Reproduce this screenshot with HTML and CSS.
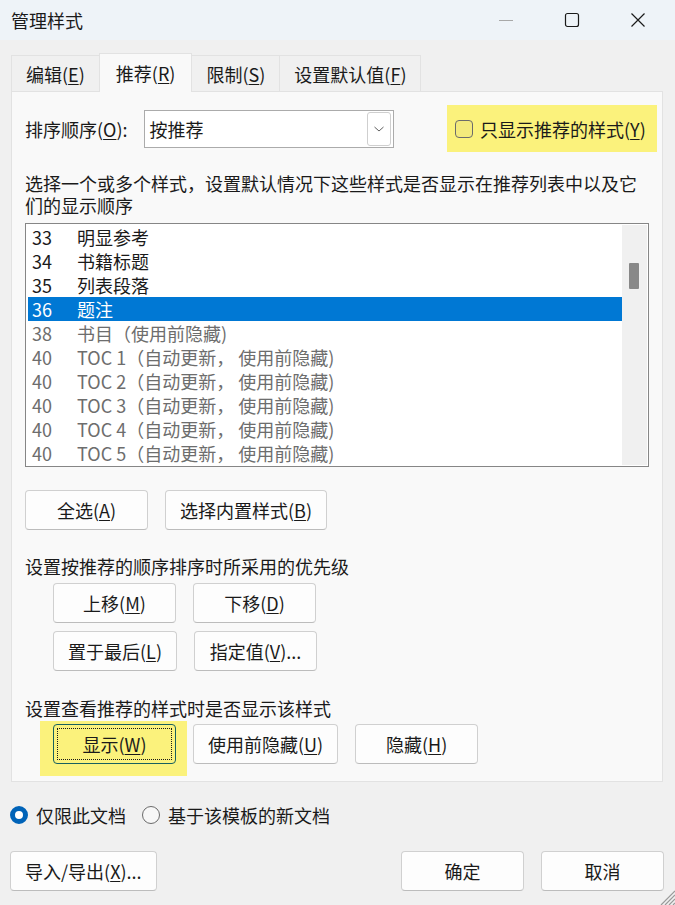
FILE: index.html
```html
<!DOCTYPE html>
<html lang="zh-CN">
<head>
    <meta charset="UTF-8">
    <meta name="viewport" content="width=device-width, initial-scale=1.0">
    <title>管理样式</title>
    <link rel="stylesheet" href="styles.css">
</head>
<body>
<div class="window">
    <div class="titlebar">
        <span class="title">管理样式</span>
        <div class="controls">
            <div class="ctrl">
                <svg width="16" height="16" viewBox="0 0 16 16"><line x1="1" y1="8.5" x2="15" y2="8.5" stroke="#a8a8a8" stroke-width="1"/></svg>
            </div>
            <div class="ctrl">
                <svg width="16" height="16" viewBox="0 0 16 16"><rect x="1.5" y="1.5" width="13" height="13" rx="2" fill="none" stroke="#1a1a1a" stroke-width="1.2"/></svg>
            </div>
            <div class="ctrl">
                <svg width="16" height="16" viewBox="0 0 16 16"><path d="M1.5 1.5 L14.5 14.5 M14.5 1.5 L1.5 14.5" stroke="#1a1a1a" stroke-width="1.2"/></svg>
            </div>
        </div>
    </div>

    <div class="dialog">
        <div class="tabs">
            <div class="tab">编辑(<u>E</u>)</div>
            <div class="tab active">推荐(<u>R</u>)</div>
            <div class="tab">限制(<u>S</u>)</div>
            <div class="tab">设置默认值(<u>F</u>)</div>
        </div>

        <div class="panel">
            <div class="sort-row">
                <span class="sort-label">排序顺序(<u>O</u>):</span>
                <div class="combo">
                    <span class="combo-value">按推荐</span>
                    <div class="combo-btn">
                        <svg width="12" height="8" viewBox="0 0 12 8"><path d="M1.5 2 L6 6 L10.5 2" fill="none" stroke="#606060" stroke-width="1"/></svg>
                    </div>
                </div>
                <div class="highlight check-wrap">
                    <span class="checkbox"></span>
                    <span>只显示推荐的样式(<u>Y</u>)</span>
                </div>
            </div>

            <p class="desc">选择一个或多个样式，设置默认情况下这些样式是否显示在推荐列表中以及它们的显示顺序</p>

            <div class="listbox">
                <div class="rows" id="rows"></div>
                <div class="scrollbar"><div class="thumb"></div></div>
            </div>

            <div class="btn-row first">
                <button class="btn">全选(<u>A</u>)</button>
                <button class="btn">选择内置样式(<u>B</u>)</button>
            </div>

            <p class="group-label">设置按推荐的顺序排序时所采用的优先级</p>
            <div class="btn-row indent">
                <button class="btn">上移(<u>M</u>)</button>
                <button class="btn">下移(<u>D</u>)</button>
            </div>
            <div class="btn-row indent second">
                <button class="btn">置于最后(<u>L</u>)</button>
                <button class="btn">指定值(<u>V</u>)...</button>
            </div>

            <p class="group-label lower">设置查看推荐的样式时是否显示该样式</p>
            <div class="btn-row indent show-row">
                <div class="highlight focus-wrap">
                    <button class="btn focused"><span class="focus-ring">显示(<u>W</u>)</span></button>
                </div>
                <button class="btn">使用前隐藏(<u>U</u>)</button>
                <button class="btn">隐藏(<u>H</u>)</button>
            </div>
        </div>

        <div class="scope">
            <label class="radio-item"><span class="radio on"></span>仅限此文档</label>
            <label class="radio-item"><span class="radio"></span>基于该模板的新文档</label>
        </div>

        <div class="footer">
            <button class="btn">导入/导出(<u>X</u>)...</button>
            <div class="footer-right">
                <button class="btn">确定</button>
                <button class="btn">取消</button>
            </div>
        </div>
    </div>

    <svg class="grip" width="20" height="20" viewBox="0 0 20 20">
        <path d="M6 20 L20 6 M10 20 L20 10 M14 20 L20 14 M18 20 L20 18" stroke="#9a9a9a" stroke-width="1.2"/>
    </svg>
</div>

<script>
    const styles = [
        { num: '33', name: '明显参考' },
        { num: '34', name: '书籍标题' },
        { num: '35', name: '列表段落' },
        { num: '36', name: '题注', selected: true },
        { num: '38', name: '书目（使用前隐藏)', hidden: true },
        { num: '40', name: 'TOC 1（自动更新， 使用前隐藏)', hidden: true },
        { num: '40', name: 'TOC 2（自动更新， 使用前隐藏)', hidden: true },
        { num: '40', name: 'TOC 3（自动更新， 使用前隐藏)', hidden: true },
        { num: '40', name: 'TOC 4（自动更新， 使用前隐藏)', hidden: true },
        { num: '40', name: 'TOC 5（自动更新， 使用前隐藏)', hidden: true }
    ];

    const rows = document.getElementById('rows');
    styles.forEach(item => {
        const row = document.createElement('div');
        row.classList.add('row');
        if (item.selected) row.classList.add('selected');
        if (item.hidden) row.classList.add('muted');
        row.innerHTML = `<span class="num">${item.num}</span><span class="name">${item.name}</span>`;
        rows.appendChild(row);
    });
</script>
</body>
</html>
```

FILE: styles.css
```css
* {
    box-sizing: border-box;
}
body {
    margin: 0;
    font-family: "Noto Sans CJK SC", "Noto Sans", sans-serif;
    font-size: 18px;
    color: #1a1a1a;
    background: #f0f0f0;
}
u {
    text-underline-offset: 2px;
}
.window {
    position: relative;
    width: 675px;
    height: 905px;
    overflow: hidden;
    background: #f0f0f0;
}

/* title bar */
.titlebar {
    display: flex;
    align-items: center;
    height: 40px;
    padding-left: 11px;
    background: #eef3f8;
}
.title {
    flex: 1;
    font-size: 18px;
}
.controls {
    display: flex;
    height: 40px;
    margin-right: 4px;
}
.ctrl {
    display: flex;
    align-items: center;
    justify-content: center;
    width: 66px;
}

.dialog {
    padding: 13px 12px 0 10px;
}

/* tabs */
.tabs {
    display: flex;
    align-items: flex-end;
    height: 38px;
    margin-left: 1px;
}
.tab {
    display: flex;
    align-items: center;
    height: 36px;
    padding: 0 14px;
    border: 1px solid #e2e2e2;
    border-bottom: none;
    border-right: none;
    background: #f0f0f0;
    white-space: nowrap;
}
.tab:last-child {
    border-right: 1px solid #e2e2e2;
}
.tab.active {
    position: relative;
    z-index: 1;
    height: 39px;
    margin-bottom: -1px;
    padding: 0 16px;
    background: #f9f9f9;
    border-right: 1px solid #e2e2e2;
}
.tab.active + .tab {
    border-left: none;
}

/* main panel */
.panel {
    height: 691px;
    margin-left: 1px;
    padding: 0 13px;
    border: 1px solid #e2e2e2;
    background: #f9f9f9;
}
.sort-row {
    display: flex;
    align-items: center;
    height: 47px;
    margin-top: 13px;
}
.sort-label {
    white-space: nowrap;
}
.combo {
    display: flex;
    align-items: center;
    width: 250px;
    height: 38px;
    margin-left: 16px;
    padding: 0 2px 0 5px;
    border: 1px solid #ababab;
    background: #fff;
}
.combo-value {
    flex: 1;
}
.combo-btn {
    display: flex;
    align-items: center;
    justify-content: center;
    width: 24px;
    height: 34px;
    border: 1px solid #cfcfcf;
    border-radius: 3px;
}
.highlight {
    background: #fbf27c;
}
.check-wrap {
    display: flex;
    align-items: center;
    gap: 7px;
    width: 210px;
    height: 47px;
    margin-left: auto;
    margin-right: -8px;
    padding-left: 8px;
    white-space: nowrap;
}
.checkbox {
    width: 18px;
    height: 18px;
    border: 1px solid #6b6b6b;
    border-radius: 4px;
    background: #f3ea7c;
}
.desc {
    margin: 20px 0 0;
    line-height: 22px;
}

/* list */
.listbox {
    display: flex;
    height: 244px;
    margin-top: 7px;
    padding: 1px;
    border: 1px solid #868686;
    background: #fff;
}
.rows {
    flex: 1;
}
.row {
    display: flex;
    align-items: center;
    height: 24px;
    padding-left: 5px;
    white-space: nowrap;
}
.row .num {
    width: 45px;
}
.row.muted {
    color: #6d6d6d;
}
.row.selected {
    margin-left: 1px;
    padding-left: 4px;
    background: #0078d4;
    color: #fff;
}
.scrollbar {
    width: 25px;
    background: #f0f0f0;
}
.thumb {
    width: 10px;
    height: 26px;
    margin: 38px 0 0 7px;
    border-radius: 1px;
    background: #888;
}

/* buttons */
.btn {
    min-width: 123px;
    height: 40px;
    padding: 0 14px;
    border: 1px solid #d0d0d0;
    border-bottom-color: #bcbcbc;
    border-radius: 4px;
    background: #fdfdfd;
    font-family: inherit;
    font-size: 18px;
    color: #1a1a1a;
    white-space: nowrap;
}
.btn-row {
    display: flex;
    gap: 17px;
}
.btn-row.first {
    margin-top: 23px;
}
.btn-row.indent {
    padding-left: 28px;
}
.btn-row.second {
    margin-top: 8px;
}
.btn-row.show-row {
    margin-top: 4px;
}
.group-label {
    margin: 24px 0 5px;
    line-height: 24px;
}
.group-label.lower {
    margin: 25px 0 0;
}
.focus-wrap {
    margin: -3px -11px -12px -13px;
    padding: 3px 11px 12px 13px;
}
.btn.focused {
    padding: 3px;
    border-color: #17605f;
    background: #fbf27c;
}
.focus-ring {
    display: flex;
    align-items: center;
    justify-content: center;
    height: 100%;
    border: 1px dotted #1a1a1a;
}

/* scope radios */
.scope {
    display: flex;
    align-items: center;
    gap: 16px;
    height: 24px;
    margin-top: 21px;
}
.radio-item {
    display: flex;
    align-items: center;
    gap: 8px;
}
.radio {
    width: 18px;
    height: 18px;
    border: 1px solid #6b6b6b;
    border-radius: 50%;
    background: #f7f7f7;
}
.radio.on {
    border: 5px solid #0063b8;
    background: #fff;
}

/* footer */
.footer {
    display: flex;
    justify-content: space-between;
    margin-top: 24px;
}
.footer-right {
    display: flex;
    gap: 17px;
    margin-right: -1px;
}
.grip {
    position: absolute;
    right: 0;
    bottom: 0;
}
```
